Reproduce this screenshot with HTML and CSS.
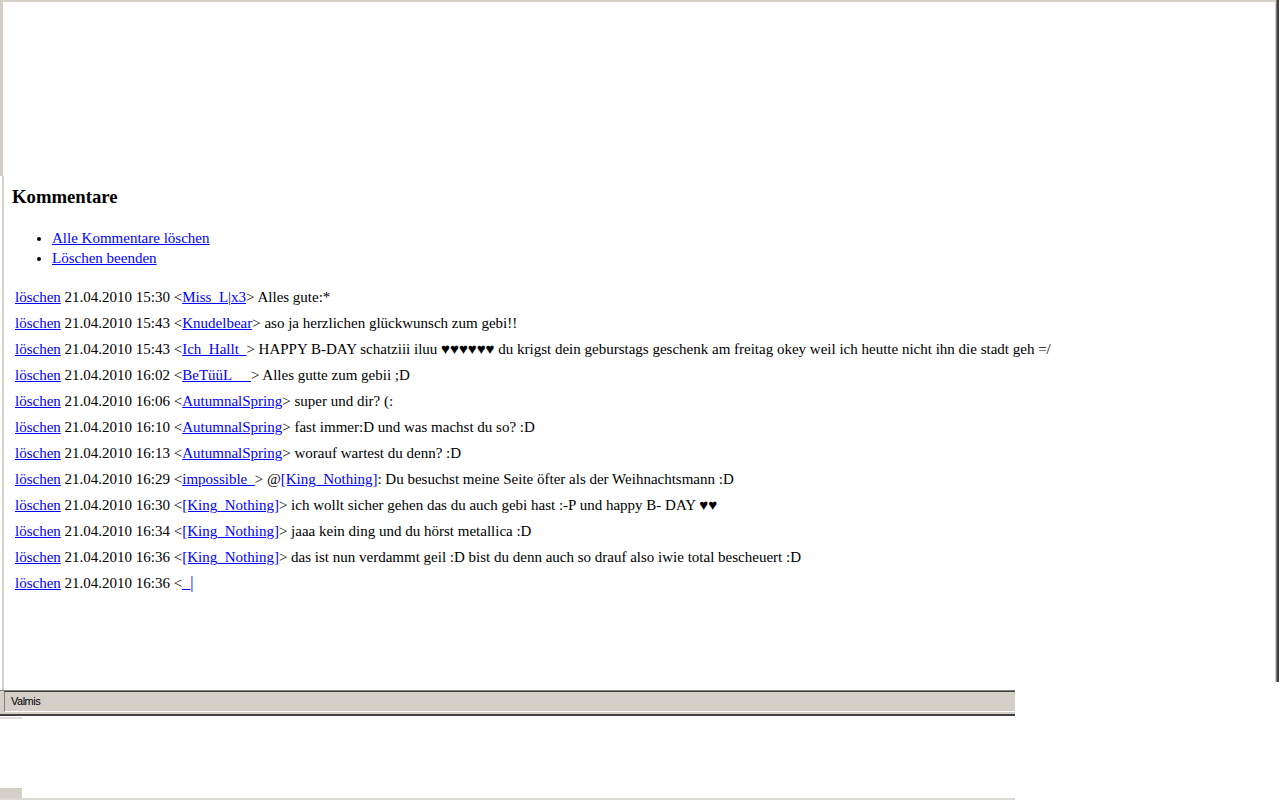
FILE: index.html
```html
<!DOCTYPE html>
<html lang="de">
<head>
    <meta charset="UTF-8">
    <title>Kommentare</title>
    <link rel="stylesheet" href="styles.css">
</head>
<body>
    <div class="viewport">
        <div class="pane">
            <!-- leerer Bereich oberhalb des Frames -->
            <div class="banner"></div>

            <div class="frame">
                <h3 class="title">Kommentare</h3>
                <ul class="actions">
                    <li><a href="#">Alle Kommentare löschen</a></li>
                    <li><a href="#">Löschen beenden</a></li>
                </ul>

                <div class="comments">
                    <div class="comment"><a href="#">löschen</a> 21.04.2010 15:30 &lt;<a href="#">Miss_L|x3</a>&gt; Alles gute:*</div>
                    <div class="comment"><a href="#">löschen</a> 21.04.2010 15:43 &lt;<a href="#">Knudelbear</a>&gt; aso ja herzlichen glückwunsch zum gebi!!</div>
                    <div class="comment"><a href="#">löschen</a> 21.04.2010 15:43 &lt;<a href="#">Ich_Hallt_</a>&gt; HAPPY B-DAY schatziii iluu ♥♥♥♥♥♥ du krigst dein geburstags geschenk am freitag okey weil ich heutte nicht ihn die stadt geh =/</div>
                    <div class="comment"><a href="#">löschen</a> 21.04.2010 16:02 &lt;<a href="#">BeTüüL&nbsp;&nbsp;&nbsp;&nbsp;&nbsp;</a>&gt; Alles gutte zum gebii ;D</div>
                    <div class="comment"><a href="#">löschen</a> 21.04.2010 16:06 &lt;<a href="#">AutumnalSpring</a>&gt; super und dir? (:</div>
                    <div class="comment"><a href="#">löschen</a> 21.04.2010 16:10 &lt;<a href="#">AutumnalSpring</a>&gt; fast immer:D und was machst du so? :D</div>
                    <div class="comment"><a href="#">löschen</a> 21.04.2010 16:13 &lt;<a href="#">AutumnalSpring</a>&gt; worauf wartest du denn? :D</div>
                    <div class="comment"><a href="#">löschen</a> 21.04.2010 16:29 &lt;<a href="#">impossible_</a>&gt; @<a href="#">[King_Nothing]</a>: Du besuchst meine Seite öfter als der Weihnachtsmann :D</div>
                    <div class="comment"><a href="#">löschen</a> 21.04.2010 16:30 &lt;<a href="#">[King_Nothing]</a>&gt; ich wollt sicher gehen das du auch gebi hast :-P und happy B- DAY ♥♥</div>
                    <div class="comment"><a href="#">löschen</a> 21.04.2010 16:34 &lt;<a href="#">[King_Nothing]</a>&gt; jaaa kein ding und du hörst metallica :D</div>
                    <div class="comment"><a href="#">löschen</a> 21.04.2010 16:36 &lt;<a href="#">[King_Nothing]</a>&gt; das ist nun verdammt geil :D bist du denn auch so drauf also iwie total bescheuert :D</div>
                    <div class="comment"><a href="#">löschen</a> 21.04.2010 16:36 &lt;<a href="#" class="cut">_|</a></div>
                </div>
            </div>
        </div>
        <div class="edge"></div>
    </div>

    <div class="statusbar">
        <div class="status-cell">Valmis</div>
    </div>

    <div class="below">
        <div class="tick"></div>
        <div class="foot">
            <div class="foot-block"></div>
        </div>
    </div>
</body>
</html>
```

FILE: styles.css
```css
/* Global */
body {
    margin: 0;
    background-color: #ffffff;
    color: #000000;
    font-family: 'Liberation Serif', 'Times New Roman', serif;
    font-size: 15px;
}

a {
    color: #0000ff;
    text-decoration: underline;
}

/* Browser-Fenster */
.viewport {
    display: flex;
    height: 690px;
}

.pane {
    flex: 1;
    display: flex;
    flex-direction: column;
}

.banner {
    height: 174px;
    border-top: 2px solid #d4d0c8;
    border-left: 3px solid #d4d0c8;
}

.frame {
    flex: 1;
    margin-left: 2px;
    border-left: 2px solid #d4d0c8;
    padding: 10px 8px 0;
}

.edge {
    width: 1px;
    height: 682px;
    border-left: 1px solid #d4d0c8;
    border-right: 2px solid #404040;
    background-color: #808080;
    margin-right: 1px;
}

/* Inhalt */
.title {
    margin: 0 0 20px;
    font-size: 18.72px;
    line-height: 22px;
    font-weight: bold;
}

.actions {
    margin: 0 0 16px;
    padding-left: 40px;
    line-height: 20px;
}

.comments {
    padding-left: 3px;
}

.comment {
    line-height: 26px;
    white-space: nowrap;
}

.cut {
    font-size: 16px;
}

/* Statusleiste */
.statusbar {
    width: 1015px;
    background-color: #d4d0c8;
    border-top: 1px solid #808080;
    border-bottom: 2px solid #404040;
}

.status-cell {
    margin: 0 0 2px 4px;
    height: 19px;
    line-height: 19px;
    padding-left: 6px;
    border-top: 1px solid #404040;
    border-left: 1px solid #808080;
    border-bottom: 1px solid #ffffff;
    font-family: 'Liberation Sans', Arial, sans-serif;
    font-size: 11px;
    letter-spacing: -0.5px;
    color: #000000;
}

.below {
    width: 1015px;
    height: 84px;
    display: flex;
    flex-direction: column;
    justify-content: space-between;
}

.tick {
    width: 22px;
    height: 2px;
    margin-top: 1px;
    background-color: #e2e0da;
}

.foot {
    height: 10px;
    border-bottom: 2px solid #dcd9d2;
}

.foot-block {
    width: 22px;
    height: 100%;
    background-color: #d4d0c8;
}
```
